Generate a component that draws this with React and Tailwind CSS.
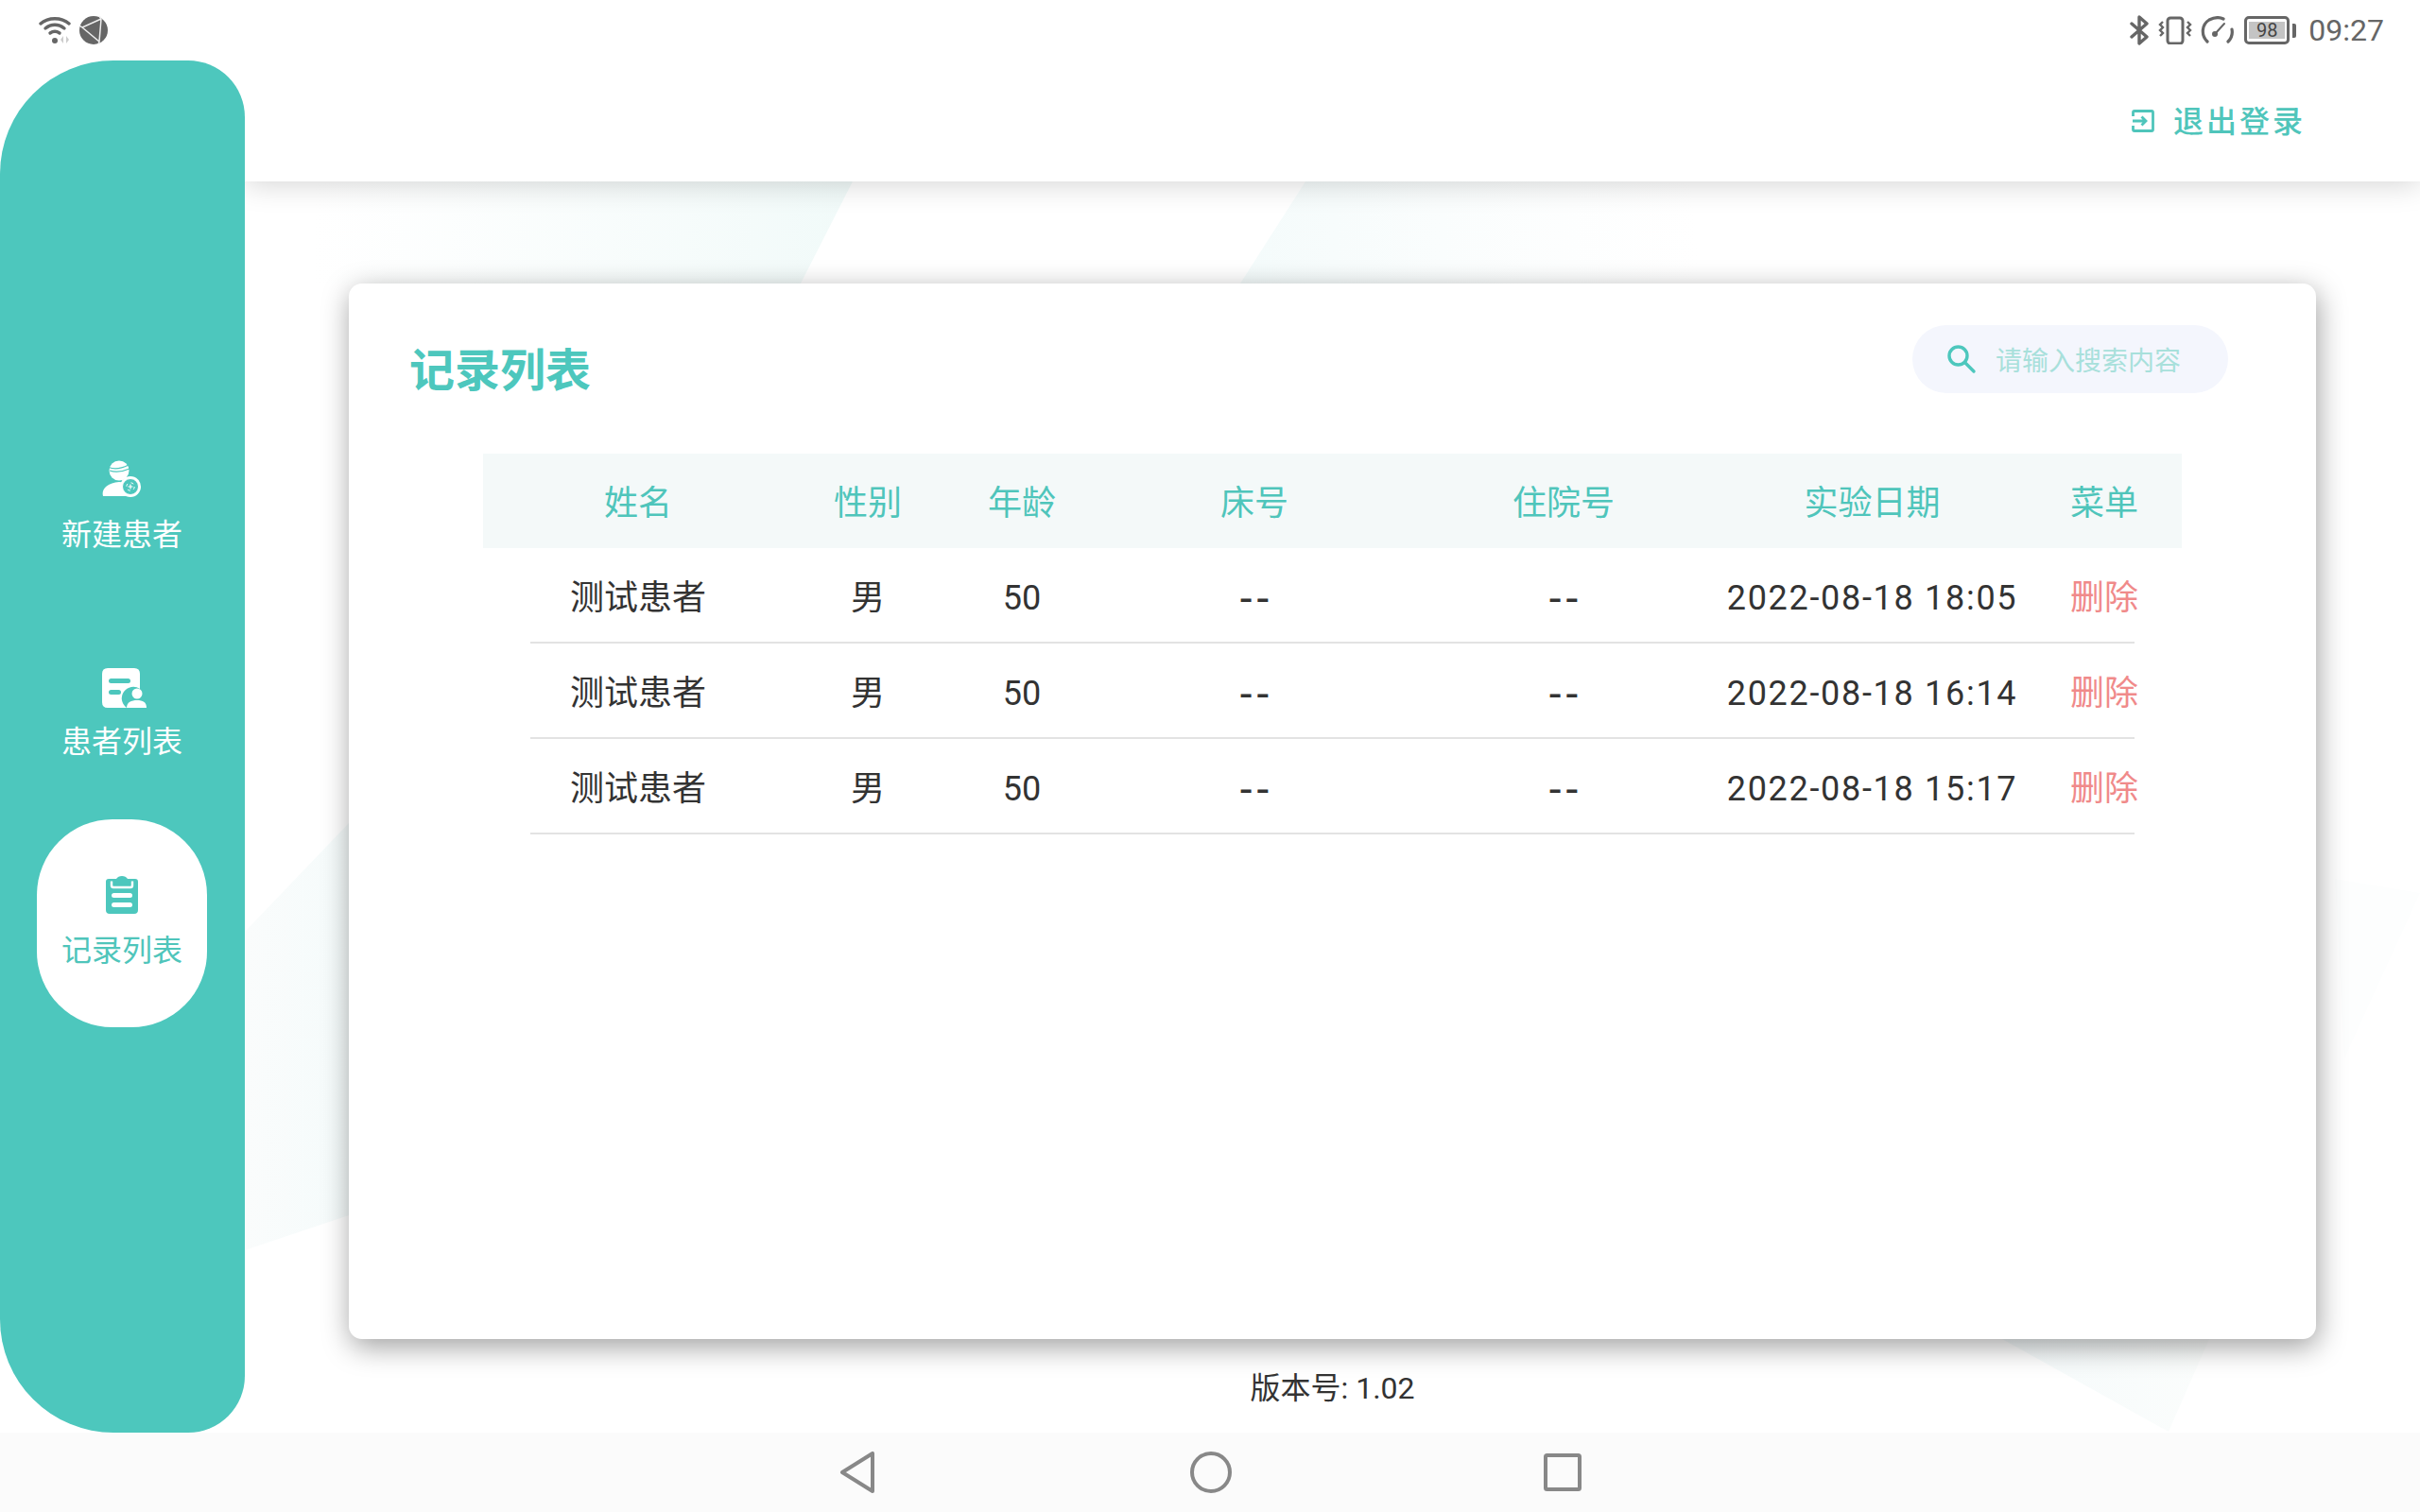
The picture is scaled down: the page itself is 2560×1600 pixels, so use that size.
const ROWS = [
  { date: '2022-08-18 18:05' },
  { date: '2022-08-18 16:14' },
  { date: '2022-08-18 15:17' },
];

const COLS = 'grid grid-cols-[324px_162px_164px_328px_326px_327px_164px] items-center pl-[2px] text-center';

function StatusBar() {
  return (
    <div className="relative z-20 flex h-16 items-center justify-between bg-white pl-[41px] pr-[38px] text-[#666]">
      <div className="flex items-center gap-[9px]">
        <svg width="34" height="30" viewBox="0 0 34 30" fill="none" stroke="#666" strokeWidth="3.4" strokeLinecap="round">
          <path d="M2 8C10 1 24 1 32 8" />
          <path d="M7 13C13 8 21 8 27 13" />
          <path d="M12 18C15 16 19 16 22 18" />
          <circle cx="17" cy="26" r="3" fill="#666" stroke="none" />
          <path d="M26 21v8l-3-4zM29 21v8l3-4z" fill="#ccc" stroke="none" />
        </svg>
        <svg width="30" height="30" viewBox="0 0 30 30">
          <circle cx="15" cy="15" r="15" fill="#666" />
          <path d="M23 3L3 12L21 27L23 3M23 3L21 0M3 12L0 10M21 27L20 30" fill="none" stroke="#eee" strokeWidth="1.5" />
        </svg>
      </div>
      <div className="flex items-center">
        <svg width="20" height="32" viewBox="0 0 20 32" fill="none" stroke="#666" strokeWidth="3.4" strokeLinejoin="round" strokeLinecap="round">
          <path d="M2 9L18 23L10 30V2L18 9L2 23" />
        </svg>
        <svg className="ml-[10px]" width="36" height="30" viewBox="0 0 36 30" fill="none" stroke="#666" strokeWidth="3">
          <rect x="10" y="2" width="16" height="27" rx="3" />
          <path d="M5 6l-3 3 3 3-3 3 3 3-3 3M31 6l3 3-3 3 3 3-3 3 3 3" strokeWidth="2.4" />
        </svg>
        <svg className="ml-[9px]" width="35" height="30" viewBox="0 0 35 30" fill="none" stroke="#666" strokeWidth="3.2" strokeLinecap="round">
          <path d="M7 27C0 20 1 9 9 4C15 1 20 1 24 3" />
          <path d="M33 14C34 19 33 23 29 27" />
          <path d="M15 19L25 8" strokeWidth="2" />
          <circle cx="15" cy="19" r="3" fill="#666" stroke="none" />
        </svg>
        <div className="ml-[11px] flex h-[30px] w-[48px] items-center justify-center rounded-[5px] border-[3px] border-[#666]">
          <div className="flex h-[18px] w-[38px] items-center justify-center bg-[#c4c4c4] text-[20px] leading-none text-[#444]">98</div>
        </div>
        <div className="ml-[3px] h-[15px] w-[4px] rounded-r-[2px] bg-[#666]" />
        <span className="ml-[13px] text-[32px] leading-none">09:27</span>
      </div>
    </div>
  );
}

function NewPatientIcon() {
  return (
    <svg width="42" height="40" viewBox="0 0 42 40" className="mb-[19px]">
      <circle cx="18" cy="11" r="10.5" fill="#fff" />
      <path d="M7 7.5C13 10 20 9 28 5M8 11C14 13 22 12 29 9" fill="none" stroke="#4dc7bd" strokeWidth="1.3" />
      <path d="M1 38C-1 31 5 24 18 23C22 23 26 24 29 26C24 30 24 35 27 38Z" fill="#fff" />
      <circle cx="30" cy="28" r="11" fill="#fff" />
      <circle cx="30" cy="28" r="8.5" fill="#4dc7bd" stroke="#fff" />
      <circle cx="30" cy="28" r="4.2" fill="none" stroke="#fff" strokeWidth="1" strokeDasharray="3 3.6" />
      <path d="M30 25.5v5M27.5 28h5" stroke="#fff" strokeWidth="1.2" />
    </svg>
  );
}

function PatientListIcon() {
  return (
    <svg width="48" height="42" viewBox="0 0 48 42" className="mb-[16px] ml-[6px]">
      <path d="M6 0H34Q40 0 40 6V22A11 11 0 0 0 26 42H6Q0 42 0 36V6Q0 0 6 0Z" fill="#fff" />
      <rect x="7" y="11" width="23" height="5" rx="2.5" fill="#4dc7bd" />
      <rect x="7" y="23" width="13" height="5" rx="2.5" fill="#4dc7bd" />
      <circle cx="37" cy="27" r="5.5" fill="#fff" />
      <path d="M26 42C26 36 31 34 37 34C43 34 47 36 47 42Z" fill="#fff" />
    </svg>
  );
}

function RecordIcon() {
  return (
    <svg width="36" height="40" viewBox="0 0 36 40" className="mb-[19px]">
      <path d="M4 3H12Q14 0 18 0Q22 0 24 3H32Q35 3 35 6V36Q35 40 31 40H5Q1 40 1 36V6Q1 3 4 3Z" fill="#4dc7bd" />
      <path d="M7 5.5V10Q7 12 9 12H27Q29 12 29 10V5.5" fill="none" stroke="#fff" strokeWidth="2.4" />
      <rect x="7" y="18" width="22" height="5" rx="2.5" fill="#fff" />
      <rect x="7" y="28" width="22" height="5" rx="2.5" fill="#fff" />
    </svg>
  );
}

function NavItem({ icon, label, active }) {
  return (
    <div className={active
      ? 'mx-[39px] flex h-[220px] w-[180px] flex-col items-center justify-center rounded-[80px] bg-white pb-[2px] text-[#4fc5bb]'
      : 'mx-[39px] flex h-[220px] w-[180px] flex-col items-center justify-center pb-[2px] text-white'}>
      {icon}
      <span className="text-[32px] leading-[40px]">{label}</span>
    </div>
  );
}

function Sidebar() {
  return (
    <div className="relative z-20 h-[1452px] w-[259px] shrink-0 rounded-tl-[120px] rounded-tr-[60px] rounded-br-[60px] rounded-bl-[120px] bg-[#4dc7bd] pt-[363px]">
      <NavItem icon={<NewPatientIcon />} label="新建患者" />
      <NavItem icon={<PatientListIcon />} label="患者列表" />
      <NavItem icon={<RecordIcon />} label="记录列表" active />
    </div>
  );
}

function Table() {
  return (
    <div className="ml-[142px] mt-[64px] w-[1797px]">
      <div className={`${COLS} h-[100px] bg-[#f4f9f9] pt-[5px] text-[#4fc5bb]`}>
        <span>姓名</span>
        <span>性别</span>
        <span>年龄</span>
        <span>床号</span>
        <span>住院号</span>
        <span>实验日期</span>
        <span>菜单</span>
      </div>
      {ROWS.map((row) => (
        <div key={row.date} className={`${COLS} relative h-[101px] pt-[4px] text-[#333] after:absolute after:inset-x-[50px] after:bottom-0 after:h-[2px] after:bg-[#e3e3e3]`}>
          <span>测试患者</span>
          <span>男</span>
          <span>50</span>
          <span className="pl-[5px] text-[46px] leading-none tracking-[5px]">--</span>
          <span className="pl-[5px] text-[46px] leading-none tracking-[5px]">--</span>
          <span className="tracking-[1.7px]">{row.date}</span>
          <span className="text-[#f08a8a]">删除</span>
        </div>
      ))}
    </div>
  );
}

export default function App() {
  return (
    <div className="relative flex h-[1600px] w-[2560px] flex-col overflow-hidden bg-white font-['Roboto','Noto_Sans_CJK_SC',sans-serif] text-[36px]">
      {/* faint shapes behind the card */}
      <svg className="absolute left-0 top-0" width="2560" height="1600" viewBox="0 0 2560 1600">
        <defs>
          <linearGradient id="shapeA" x1="0" y1="0" x2="1" y2="0">
            <stop offset="0" stopColor="#f4fbfa" stopOpacity="0" />
            <stop offset="1" stopColor="#f1faf9" />
          </linearGradient>
          <linearGradient id="shapeB" x1="0" y1="0" x2="1" y2="0">
            <stop offset="0" stopColor="#f4fbfb" />
            <stop offset="1" stopColor="#f9fcfc" stopOpacity="0" />
          </linearGradient>
          <linearGradient id="shapeC" x1="0" y1="0" x2="1" y2="0">
            <stop offset="0" stopColor="#fafcfc" />
            <stop offset="1" stopColor="#f5fbfb" />
          </linearGradient>
          <linearGradient id="shapeD" x1="0" y1="0" x2="1" y2="0">
            <stop offset="0" stopColor="#f5fafb" />
            <stop offset="1" stopColor="#fbfdfc" />
          </linearGradient>
        </defs>
        <polygon points="330,192 902,192 847,300 330,300" fill="url(#shapeA)" />
        <polygon points="1381,192 1788,192 1800,300 1312,300" fill="url(#shapeB)" />
        <polygon points="259,986 369,871 369,1286 259,1323" fill="url(#shapeC)" />
        <polygon points="2118,1417 2337,1417 2294,1515" fill="url(#shapeD)" />
        <polygon points="2470,930 2560,945 2480,1120" fill="#fdfefe" />
      </svg>

      <StatusBar />

      <div className="relative flex h-[1452px]">
        <Sidebar />
        <div className="flex flex-1 flex-col">
          <div className="relative z-10 flex h-[128px] items-center justify-end bg-white pr-[121px] shadow-[0_2px_30px_rgba(0,0,0,0.18)] [clip-path:inset(0_0_-60px_0)]">
            <svg width="24" height="24" viewBox="0 0 24 24" fill="none" stroke="#4fc5bb" strokeWidth="2.8">
              <path d="M1.5 7V3Q1.5 1.5 3 1.5H21Q22.5 1.5 22.5 3V21Q22.5 22.5 21 22.5H3Q1.5 22.5 1.5 21V17" />
              <path d="M1 12H15M10.5 7.5L15 12L10.5 16.5" />
            </svg>
            <span className="ml-[20px] pt-[2px] text-[32px] font-medium leading-none tracking-[3px] text-[#4fc5bb]">退出登录</span>
          </div>
          <div className="relative ml-[110px] mt-[108px] h-[1117px] w-[2081px] rounded-[14px] bg-white shadow-[2px_8px_30px_rgba(0,0,0,0.38)]">
            <div className="flex h-[116px] items-start justify-between pl-[64px] pr-[93px] pt-[44px]">
              <h1 className="mt-[17px] text-[48px] font-bold leading-[64px] text-[#4dc7bd]">记录列表</h1>
              <div className="flex h-[72px] w-[334px] items-center rounded-[36px] bg-[#f4f6fd] pl-[36px]">
                <svg width="32" height="32" viewBox="0 0 32 32" fill="none" stroke="#4dc7bd" strokeWidth="3.4">
                  <circle cx="12.5" cy="12.5" r="9.5" />
                  <path d="M19.5 19.5L29 29" strokeLinecap="round" />
                </svg>
                <span className="ml-[20px] mt-[6px] text-[28px] leading-none text-[#a8e0db]">请输入搜索内容</span>
              </div>
            </div>
            <Table />
          </div>
          <div className="relative mt-[32px] text-center text-[32px] leading-[40px] text-[#333]">版本号: 1.02</div>
        </div>
      </div>

      <div className="relative flex h-[84px] items-center bg-[#fbfbfb] pl-[889px]">
        <svg width="36" height="44" viewBox="0 0 36 44" fill="none" stroke="#888" strokeWidth="4" strokeLinejoin="round">
          <path d="M34 2V42L2 22Z" />
        </svg>
        <svg className="ml-[334px]" width="44" height="44" viewBox="0 0 44 44" fill="none" stroke="#888" strokeWidth="4">
          <circle cx="22" cy="22" r="20" />
        </svg>
        <svg className="ml-[330px]" width="40" height="40" viewBox="0 0 40 40" fill="none" stroke="#888" strokeWidth="4" strokeLinejoin="round">
          <rect x="2" y="2" width="36" height="36" rx="1.5" />
        </svg>
      </div>
    </div>
  );
}
